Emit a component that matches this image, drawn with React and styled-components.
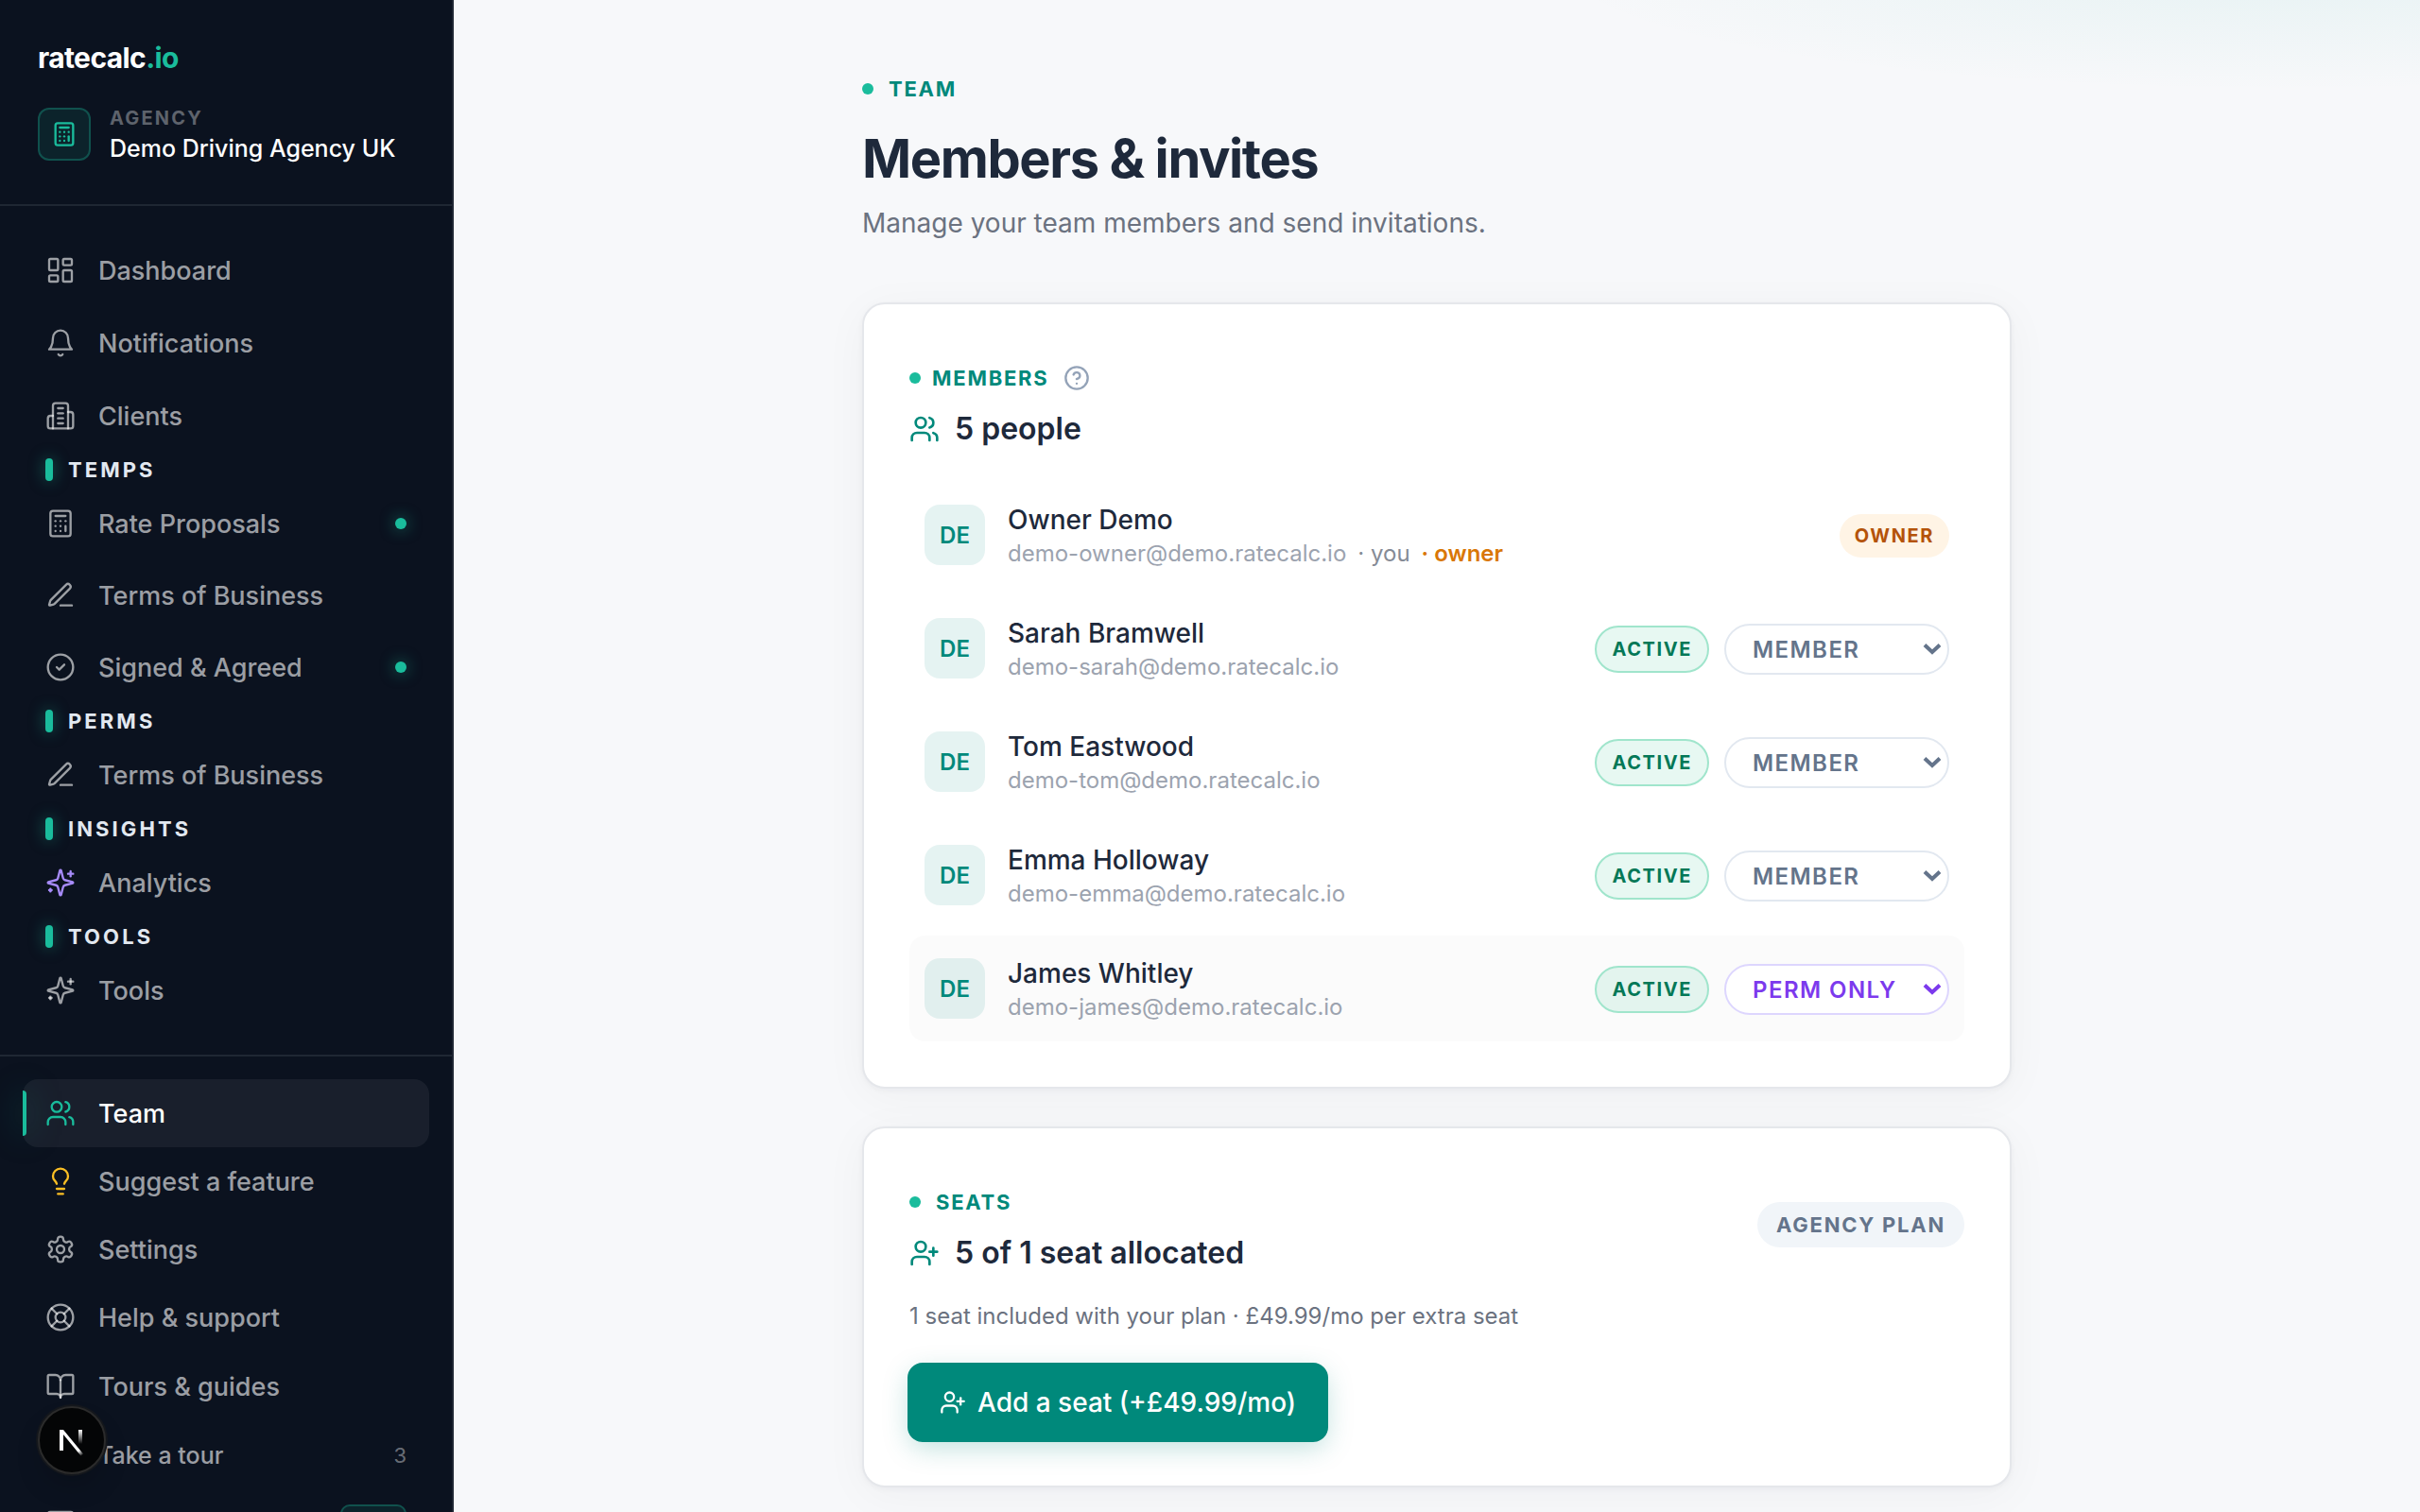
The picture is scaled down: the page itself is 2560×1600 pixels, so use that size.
import styled, { createGlobalStyle, css } from "styled-components";
import {
  BookOpen,
  Calculator,
  CircleCheck,
  CircleHelp,
  LayoutDashboard,
  Lightbulb,
  LifeBuoy,
  MessageSquare,
  UserPlus,
  Users,
} from "lucide-react";
import { useState } from "react";

const GlobalStyles = createGlobalStyle`
  :root {
    --color-brand: #00897b;
    --color-mint: #1abc9c;
    --color-navy: #0b121f;
    --color-ink: #1e293b;
    --color-grey-400: #9ca3af;
    --color-grey-500: #6b7280;
    --color-slate-400: #94a3b8;
    --color-slate-500: #64748b;
  }

  * {
    box-sizing: border-box;
    margin: 0;
    padding: 0;
  }

  body {
    font-family: Inter, "Liberation Sans", sans-serif;
    font-size: 28px;
    color: var(--color-ink);
    background-color: #f7f8fa;
    -webkit-font-smoothing: antialiased;
  }

  button,
  select {
    font: inherit;
  }

  a {
    color: inherit;
    text-decoration: none;
  }
`;

const Layout = styled.div`
  display: grid;
  grid-template-columns: 480px 1fr;
  height: 100vh;
  overflow: hidden;
`;

const Sidebar = styled.aside`
  display: flex;
  flex-direction: column;
  min-height: 0;
  overflow: hidden;
  color: #fff;
  background-color: var(--color-navy);
  border-right: 2px solid #1f2733;
`;

const SidebarHeader = styled.header`
  flex-shrink: 0;
  padding: 40px 40px 42px;
  border-bottom: 2px solid #1f2733;
`;

const Logo = styled.a`
  display: block;
  margin-bottom: 28px;
  font-size: 30px;
  line-height: 42px;
  font-weight: 700;
  letter-spacing: -0.02em;

  span {
    color: var(--color-mint);
  }
`;

const Agency = styled.div`
  display: flex;
  align-items: center;
  gap: 20px;
`;

const AgencyIcon = styled.div`
  display: grid;
  place-items: center;
  width: 56px;
  height: 56px;
  color: var(--color-mint);
  background-color: rgba(26, 188, 156, 0.1);
  border: 2px solid rgba(26, 188, 156, 0.3);
  border-radius: 12px;
`;

const AgencyLabel = styled.p`
  font-size: 20px;
  line-height: 30px;
  font-weight: 700;
  letter-spacing: 0.11em;
  color: rgba(255, 255, 255, 0.35);
`;

const AgencyName = styled.p`
  font-size: 25px;
  line-height: 34px;
  font-weight: 500;
`;

const Nav = styled.nav`
  display: flex;
  flex-direction: column;
  flex-shrink: 0;
  padding: 32px 24px;
`;

const SubNav = styled(Nav)`
  padding: 24px;
  border-top: 2px solid #1f2733;
`;

const NavGroup = styled.div`
  display: flex;
  flex-direction: column;
  gap: 4px;
`;

const NavLabel = styled.h2`
  display: flex;
  align-items: center;
  gap: 16px;
  height: 42px;
  padding: 0 24px;
  font-size: 22px;
  font-weight: 700;
  letter-spacing: 0.14em;
  color: #e2e8f0;

  &::before {
    content: "";
    width: 8px;
    height: 24px;
    border-radius: 4px;
    background-color: var(--color-mint);
    box-shadow: 0 0 16px rgba(26, 188, 156, 0.5);
  }
`;

const navItem = css`
  display: flex;
  align-items: center;
  gap: 24px;
  width: 100%;
  height: 72px;
  padding: 0 24px;
  font-size: ${(props) => (props.$small ? 25 : 27)}px;
  font-weight: 500;
  text-align: left;
  color: rgba(255, 255, 255, 0.6);
  border: none;
  border-radius: 16px;
  background: none;

  svg {
    flex-shrink: 0;
    color: ${(props) => props.$iconColor || "inherit"};
  }
`;

const NavLink = styled.a`
  ${navItem}

  ${(props) =>
    props.$active &&
    css`
      position: relative;
      color: #fff;
      background-color: rgba(255, 255, 255, 0.06);

      &::before {
        content: "";
        position: absolute;
        left: 0;
        top: 12px;
        bottom: 12px;
        width: 4px;
        border-radius: 0 4px 4px 0;
        background-color: var(--color-mint);
        box-shadow: 0 0 32px rgba(26, 188, 156, 0.5);
      }
    `}
`;

const NavButton = styled.button`
  ${navItem}
  height: 74px;
  cursor: pointer;
`;

const NavText = styled.span`
  flex: 1;
  white-space: nowrap;
`;

const Dot = styled.span`
  width: 12px;
  height: 12px;
  border-radius: 50%;
  background-color: var(--color-mint);
  box-shadow: ${(props) =>
    props.$glow ? "0 0 16px rgba(26, 188, 156, 0.6)" : "none"};
`;

const Count = styled.span`
  font-size: 22px;
  font-weight: 400;
  color: rgba(255, 255, 255, 0.4);
`;

const NewTag = styled.span`
  display: grid;
  place-items: center;
  width: 70px;
  height: 40px;
  font-size: 20px;
  font-weight: 600;
  color: var(--color-mint);
  background-color: rgba(26, 188, 156, 0.1);
  border: 2px solid rgba(26, 188, 156, 0.3);
  border-radius: 10px;
`;

const DevBadge = styled.button`
  position: fixed;
  left: 40px;
  bottom: 40px;
  display: grid;
  place-items: center;
  width: 72px;
  height: 72px;
  border: 2px solid #2b2b2b;
  border-radius: 50%;
  background-color: #040506;
  box-shadow: 0 0 0 2px #14171c, 0 16px 32px -8px rgba(0, 0, 0, 0.24);
`;

const Main = styled.main`
  min-width: 0;
  overflow: hidden;
  padding: 64px 32px;
  background: radial-gradient(
      ellipse 780px 136px at 93% -40px,
      rgba(26, 170, 160, 0.08),
      transparent
    )
    #f7f8fa;
`;

const Container = styled.div`
  display: flex;
  flex-direction: column;
  gap: 40px;
  max-width: 1216px;
  margin: 0 auto;
`;

const PageHeader = styled.header`
  margin-bottom: 24px;
`;

const Eyebrow = styled.p`
  display: flex;
  align-items: center;
  gap: ${(props) => (props.$tight ? 12 : 16)}px;
  height: 60px;
  font-size: 22px;
  font-weight: 700;
  letter-spacing: 0.08em;
  color: var(--color-brand);
`;

const Title = styled.h1`
  margin-top: 12px;
  font-size: 56px;
  line-height: 64px;
  font-weight: 700;
  letter-spacing: -0.025em;
`;

const Subtitle = styled.p`
  margin-top: 16px;
  font-size: 28px;
  line-height: 40px;
  color: var(--color-grey-500);
`;

const Card = styled.section`
  padding: 48px;
  background-color: #fff;
  border: 2px solid #e5e7eb;
  border-radius: 24px;
  box-shadow: 0 2px 6px rgba(15, 23, 42, 0.04),
    0 8px 48px rgba(15, 23, 42, 0.04);
`;

const CardHeader = styled.header`
  display: flex;
  align-items: center;
  justify-content: space-between;
`;

const CardTitle = styled.h2`
  display: flex;
  align-items: center;
  gap: 16px;
  font-size: 32px;
  line-height: 48px;
  font-weight: 600;

  svg {
    color: var(--color-brand);
  }
`;

const HelpButton = styled.button`
  display: grid;
  margin-left: 4px;
  color: var(--color-slate-400);
  border: none;
  background: none;
  cursor: help;
`;

const MemberList = styled.ul`
  display: flex;
  flex-direction: column;
  gap: 8px;
  margin-top: 32px;
  list-style: none;
`;

const MemberItem = styled.li`
  display: flex;
  align-items: center;
  gap: 16px;
  height: 112px;
  padding: 0 16px;
  border-radius: 16px;
  background-color: ${(props) =>
    props.$highlighted ? "rgba(0, 0, 0, 0.016)" : "transparent"};
`;

const Avatar = styled.div`
  display: grid;
  place-items: center;
  width: 64px;
  height: 64px;
  margin-right: 8px;
  font-size: 24px;
  font-weight: 600;
  color: var(--color-brand);
  background-color: rgba(0, 137, 123, 0.1);
  border-radius: 16px;
`;

const MemberInfo = styled.div`
  flex: 1;
  min-width: 0;
  padding-top: 4px;
`;

const MemberName = styled.p`
  font-size: 28px;
  line-height: 36px;
  font-weight: 500;
`;

const MemberEmail = styled.p`
  display: flex;
  gap: 12px;
  font-size: 24px;
  line-height: 36px;
  color: var(--color-grey-400);
`;

const YouTag = styled.span`
  color: #858b96;
`;

const OwnerTag = styled.span`
  font-weight: 600;
  color: #d97706;
`;

// badge and role picker sit on the text's line, a touch below the avatar's centre
const MemberActions = styled.div`
  display: flex;
  align-items: center;
  gap: 16px;
  padding-top: 2px;
`;

const badges = {
  owner: css`
    height: 46px;
    padding: 0 16px;
    font-size: 20px;
    color: #b45309;
    background-color: #fff4e5;
  `,
  active: css`
    height: 50px;
    padding: 0 16px;
    font-size: 20px;
    color: #047857;
    background-color: rgba(16, 185, 129, 0.1);
    border: 2px solid #a0e5cc;
  `,
  plan: css`
    height: 48px;
    padding: 0 20px;
    font-size: 22px;
    color: var(--color-slate-500);
    background-color: #f1f5f9;
  `,
};

const Badge = styled.span`
  display: flex;
  align-items: center;
  font-weight: 700;
  letter-spacing: 0.08em;
  white-space: nowrap;
  border-radius: 25px;
  ${(props) => badges[props.$type]}
`;

// select and chevron share one grid cell
const SelectBox = styled.div`
  display: grid;
  align-items: center;
  color: ${(props) => (props.$perm ? "#7c3aed" : "var(--color-slate-500)")};

  > * {
    grid-area: 1 / 1;
  }

  svg {
    justify-self: end;
    margin-right: 8px;
    pointer-events: none;
  }
`;

const Select = styled.select`
  appearance: none;
  width: 238px;
  height: 54px;
  padding: 0 28px;
  font-size: 24px;
  font-weight: 600;
  letter-spacing: 0.06em;
  color: inherit;
  background-color: #fff;
  border: 2px solid ${(props) => (props.$perm ? "#ddd6fe" : "#e2e8f0")};
  border-radius: 27px;
`;

const SeatNote = styled.p`
  margin-top: 24px;
  font-size: 24px;
  line-height: 38px;
  color: var(--color-grey-500);
`;

const PrimaryButton = styled.button`
  display: inline-flex;
  align-items: center;
  gap: 12px;
  height: 80px;
  margin-top: 32px;
  padding: 0 32px;
  font-size: 28px;
  font-weight: 500;
  color: #fff;
  background-color: var(--color-brand);
  border: none;
  border-radius: 14px;
  box-shadow: 0 0 0 2px var(--color-brand),
    0 8px 28px rgba(0, 137, 123, 0.25);
  cursor: pointer;
`;

const navGroups = [
  {
    items: [
      { label: "Dashboard", icon: LayoutDashboard },
      { label: "Notifications", icon: Bell, button: true },
      { label: "Clients", icon: Building },
    ],
  },
  {
    title: "TEMPS",
    items: [
      { label: "Rate Proposals", icon: Calculator, dot: true },
      { label: "Terms of Business", icon: PenLine },
      { label: "Signed & Agreed", icon: CircleCheck, dot: true },
    ],
  },
  { title: "PERMS", items: [{ label: "Terms of Business", icon: PenLine }] },
  {
    title: "INSIGHTS",
    items: [{ label: "Analytics", icon: Sparkles, iconColor: "#a78bfa" }],
  },
  { title: "TOOLS", items: [{ label: "Tools", icon: Sparkles }] },
];

const subNavItems = [
  { label: "Team", icon: Users, iconColor: "#1abc9c", active: true },
  { label: "Suggest a feature", icon: Lightbulb, iconColor: "#fbbf24" },
  { label: "Settings", icon: Gear },
  { label: "Help & support", icon: LifeBuoy },
  { label: "Tours & guides", icon: BookOpen, button: true },
  { label: "Take a tour", icon: BookOpen, small: true, count: 3 },
  { label: "Send feedback", icon: MessageSquare, small: true, tag: "New" },
];

const members = [
  { name: "Owner Demo", email: "demo-owner@demo.ratecalc.io", owner: true },
  { name: "Sarah Bramwell", email: "demo-sarah@demo.ratecalc.io" },
  { name: "Tom Eastwood", email: "demo-tom@demo.ratecalc.io" },
  { name: "Emma Holloway", email: "demo-emma@demo.ratecalc.io" },
  {
    name: "James Whitley",
    email: "demo-james@demo.ratecalc.io",
    role: "perm",
    highlighted: true,
  },
];

function LineIcon({ size = 32, strokeWidth = 2, children }) {
  return (
    <svg
      width={size}
      height={size}
      viewBox="0 0 24 24"
      fill="none"
      stroke="currentColor"
      strokeWidth={strokeWidth}
      strokeLinecap="round"
      strokeLinejoin="round"
      aria-hidden="true"
    >
      {children}
    </svg>
  );
}

function Bell(props) {
  return (
    <LineIcon {...props}>
      <path d="M6 8a6 6 0 0 1 12 0c0 7 3 9 3 9H3s3-2 3-9" />
      <path d="M10.300 21a1.940 1.940 0 0 0 3.400 0" />
    </LineIcon>
  );
}

function Building(props) {
  return (
    <LineIcon {...props}>
      <path d="M6 22V4a2 2 0 0 1 2-2h8a2 2 0 0 1 2 2v18Z" />
      <path d="M6 12H4a2 2 0 0 0-2 2v6a2 2 0 0 0 2 2h2" />
      <path d="M18 9h2a2 2 0 0 1 2 2v9a2 2 0 0 1-2 2h-2" />
      <path d="M10 6h4" />
      <path d="M10 10h4" />
      <path d="M10 14h4" />
      <path d="M10 18h4" />
    </LineIcon>
  );
}

function PenLine(props) {
  return (
    <LineIcon {...props}>
      <path d="M12 20h9" />
      <path d="M16.376 3.622a1 1 0 0 1 3.002 3.002L7.368 18.635a2 2 0 0 1-.855.506l-2.872.838a.5.5 0 0 1-.62-.62l.838-2.872a2 2 0 0 1 .506-.854z" />
    </LineIcon>
  );
}

function Sparkles(props) {
  return (
    <LineIcon {...props}>
      <path d="M9.937 15.500A2 2 0 0 0 8.500 14.063l-6.135-1.582a.5.5 0 0 1 0-.962L8.500 9.936A2 2 0 0 0 9.937 8.500l1.582-6.135a.5.5 0 0 1 .963 0L14.063 8.500A2 2 0 0 0 15.500 9.937l6.135 1.581a.5.5 0 0 1 0 .964L15.500 14.063a2 2 0 0 0-1.437 1.437l-1.582 6.135a.5.5 0 0 1-.963 0z" />
      <path d="M20 3v4" />
      <path d="M22 5h-4" />
      <path d="M4 17v2" />
      <path d="M5 18H3" />
    </LineIcon>
  );
}

function Gear(props) {
  return (
    <LineIcon {...props}>
      <path d="M12.22 2h-.44a2 2 0 0 0-2 2v.18a2 2 0 0 1-1 1.73l-.43.25a2 2 0 0 1-2 0l-.15-.08a2 2 0 0 0-2.73.73l-.22.38a2 2 0 0 0 .73 2.73l.15.1a2 2 0 0 1 1 1.72v.51a2 2 0 0 1-1 1.74l-.15.09a2 2 0 0 0-.73 2.73l.22.38a2 2 0 0 0 2.73.73l.15-.08a2 2 0 0 1 2 0l.43.25a2 2 0 0 1 1 1.73V20a2 2 0 0 0 2 2h.44a2 2 0 0 0 2-2v-.18a2 2 0 0 1 1-1.73l.43-.25a2 2 0 0 1 2 0l.15.08a2 2 0 0 0 2.73-.73l.22-.39a2 2 0 0 0-.73-2.73l-.15-.08a2 2 0 0 1-1-1.74v-.5a2 2 0 0 1 1-1.74l.15-.09a2 2 0 0 0 .73-2.73l-.22-.38a2 2 0 0 0-2.73-.73l-.15.08a2 2 0 0 1-2 0l-.43-.25a2 2 0 0 1-1-1.73V4a2 2 0 0 0-2-2z" />
      <circle cx="12" cy="12" r="3" />
    </LineIcon>
  );
}

function NavItem({ item }) {
  const {
    label,
    icon: Icon,
    iconColor,
    active,
    button,
    small,
    dot,
    count,
    tag,
  } = item;
  const content = (
    <>
      <Icon size={32} strokeWidth={1.75} />
      <NavText>{label}</NavText>
      {dot && <Dot $glow />}
      {count && <Count>{count}</Count>}
      {tag && <NewTag>{tag}</NewTag>}
    </>
  );

  if (button)
    return (
      <NavButton type="button" $iconColor={iconColor}>
        {content}
      </NavButton>
    );

  return (
    <NavLink
      href="#"
      $iconColor={iconColor}
      $active={active}
      $small={small}
      aria-current={active ? "page" : undefined}
    >
      {content}
    </NavLink>
  );
}

function RoleSelect({ name, defaultRole = "member" }) {
  const [role, setRole] = useState(defaultRole);
  const isPerm = role === "perm";

  return (
    <SelectBox $perm={isPerm}>
      <Select
        aria-label={`Role for ${name}`}
        value={role}
        onChange={(e) => setRole(e.target.value)}
        $perm={isPerm}
      >
        <option value="member">MEMBER</option>
        <option value="perm">PERM ONLY</option>
      </Select>
      <svg width="20" height="14" viewBox="0 0 20 14" fill="none">
        <path d="M2 2.500 10 10 18 2.500" stroke="currentColor" strokeWidth="4" />
      </svg>
    </SelectBox>
  );
}

function MemberRow({ member }) {
  const { name, email, owner, role, highlighted } = member;

  return (
    <MemberItem $highlighted={highlighted}>
      <Avatar>DE</Avatar>
      <MemberInfo>
        <MemberName>{name}</MemberName>
        <MemberEmail>
          <span>{email}</span>
          {owner && (
            <>
              <YouTag>· you</YouTag>
              <OwnerTag>· owner</OwnerTag>
            </>
          )}
        </MemberEmail>
      </MemberInfo>
      <MemberActions>
        {owner ? (
          <Badge $type="owner">OWNER</Badge>
        ) : (
          <>
            <Badge $type="active">ACTIVE</Badge>
            <RoleSelect name={name} defaultRole={role} />
          </>
        )}
      </MemberActions>
    </MemberItem>
  );
}

function NextLogo() {
  return (
    <svg width="40" height="40" viewBox="0 0 40 40" fill="none">
      <defs>
        <linearGradient
          id="diagonal"
          x1="22"
          y1="22"
          x2="32"
          y2="36"
          gradientUnits="userSpaceOnUse"
        >
          <stop stopColor="#fff" />
          <stop offset="0.6" stopColor="#fff" />
          <stop offset="1" stopColor="#fff" stopOpacity="0" />
        </linearGradient>
        <linearGradient
          id="stem"
          x1="28"
          y1="9"
          x2="28"
          y2="24"
          gradientUnits="userSpaceOnUse"
        >
          <stop stopColor="#fff" />
          <stop offset="1" stopColor="#fff" stopOpacity="0" />
        </linearGradient>
      </defs>
      <path d="M7 31V9H11L32 34.500L29.500 36.500L11 14V31Z" fill="url(#diagonal)" />
      <path d="M27 9H31V24H27Z" fill="url(#stem)" />
    </svg>
  );
}

function App() {
  return (
    <>
      <GlobalStyles />
      <Layout>
        <Sidebar>
          <SidebarHeader>
            <Logo href="#">
              ratecalc<span>.io</span>
            </Logo>
            <Agency>
              <AgencyIcon>
                <Calculator size={28} strokeWidth={2} />
              </AgencyIcon>
              <div>
                <AgencyLabel>AGENCY</AgencyLabel>
                <AgencyName>Demo Driving Agency UK</AgencyName>
              </div>
            </Agency>
          </SidebarHeader>

          <Nav aria-label="Main">
            {navGroups.map((group, i) => (
              <div key={i}>
                {group.title && <NavLabel>{group.title}</NavLabel>}
                <NavGroup>
                  {group.items.map((item) => (
                    <NavItem item={item} key={item.label} />
                  ))}
                </NavGroup>
              </div>
            ))}
          </Nav>

          <SubNav aria-label="Account">
            {subNavItems.map((item) => (
              <NavItem item={item} key={item.label} />
            ))}
          </SubNav>
        </Sidebar>

        <Main>
          <Container>
            <PageHeader>
              <Eyebrow>
                <Dot />
                TEAM
              </Eyebrow>
              <Title>Members & invites</Title>
              <Subtitle>
                Manage your team members and send invitations.
              </Subtitle>
            </PageHeader>

            <Card>
              <CardHeader>
                <div>
                  <Eyebrow as="div" $tight>
                    <Dot />
                    MEMBERS
                    <HelpButton type="button" aria-label="About members">
                      <CircleHelp size={28} strokeWidth={2} />
                    </HelpButton>
                  </Eyebrow>
                  <CardTitle>
                    <Users size={32} strokeWidth={2} />5 people
                  </CardTitle>
                </div>
              </CardHeader>
              <MemberList>
                {members.map((member) => (
                  <MemberRow member={member} key={member.email} />
                ))}
              </MemberList>
            </Card>

            <Card>
              <CardHeader>
                <div>
                  <Eyebrow>
                    <Dot />
                    SEATS
                  </Eyebrow>
                  <CardTitle>
                    <UserPlus size={32} strokeWidth={2} />5 of 1 seat allocated
                  </CardTitle>
                </div>
                <Badge $type="plan">AGENCY PLAN</Badge>
              </CardHeader>
              <SeatNote>
                1 seat included with your plan · £49.99/mo per extra seat
              </SeatNote>
              <PrimaryButton type="button">
                <UserPlus size={28} strokeWidth={2} />
                Add a seat (+£49.99/mo)
              </PrimaryButton>
            </Card>
          </Container>
        </Main>
      </Layout>

      <DevBadge type="button" aria-label="Open Next.js Dev Tools">
        <NextLogo />
      </DevBadge>
    </>
  );
}

export default App;
